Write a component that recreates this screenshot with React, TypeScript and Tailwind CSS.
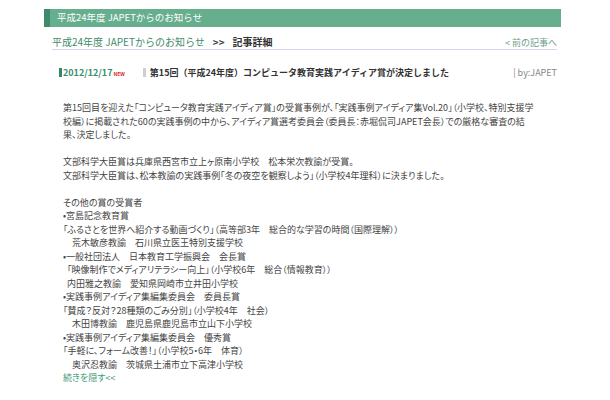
import React from "react";

const F = { fontFamily: '"Noto Sans CJK JP", "Noto Sans", sans-serif' };

const body: { t: string; cls?: string }[] = [
  { t: "第15回目を迎えた「コンピュータ教育実践アイディア賞」の受賞事例が、「実践事例アイディア集Vol.20」（小学校、特別支援学" },
  { t: "校編）に掲載された60の実践事例の中から、アイディア賞選考委員会（委員長：赤堀侃司JAPET会長）での厳格な審査の結" },
  { t: "果、決定しました。" },
  { t: "" },
  { t: "文部科学大臣賞は兵庫県西宮市立上ヶ原南小学校　松本栄次教諭が受賞。" },
  { t: "文部科学大臣賞は、松本教諭の実践事例「冬の夜空を観察しよう」（小学校4年理科）に決まりました。" },
  { t: "" },
  { t: "その他の賞の受賞者" },
  { t: "•宮島記念教育賞" },
  { t: "「ふるさとを世界へ紹介する動画づくり」（高等部3年　総合的な学習の時間（国際理解））" },
  { t: "荒木敏彦教諭　石川県立医王特別支援学校", cls: "pl-[9px]" },
  { t: "•一般社団法人　日本教育工学振興会　会長賞" },
  { t: "「映像制作でメディアリテラシー向上」（小学校6年　総合（情報教育））", cls: "pl-[4px]" },
  { t: "内田雅之教諭　愛知県岡崎市立井田小学校", cls: "pl-[4px]" },
  { t: "•実践事例アイディア集編集委員会　委員長賞" },
  { t: "「賛成？反対？28種類のごみ分別」（小学校4年　社会）" },
  { t: "木田博教諭　鹿児島県鹿児島市立山下小学校", cls: "pl-[9px]" },
  { t: "•実践事例アイディア集編集委員会　優秀賞" },
  { t: "「手軽に、フォーム改善！」（小学校5・6年　体育）" },
  { t: "奥沢忍教諭　茨城県土浦市立下高津小学校", cls: "pl-[9px]" },
];

export default function App() {
  return (
    <div className="w-[610px] h-[400px] bg-white pt-[9px] pl-[44px] overflow-hidden" style={F}>
      <div className="w-[517px]">
        <div className="h-[18px] flex items-center bg-[#66ae8e] border-l-[6px] border-[#3e8a6b] pl-[7px] text-white text-[9.5px] leading-none">
          平成24年度 JAPETからのお知らせ
        </div>
        <div className="mt-[8px] ml-[8px] mr-[4px] h-[15px] flex items-center justify-between border-b border-[#d4d4ea]">
          <div className="text-[10px] leading-none text-[#333] flex items-center">
            <span className="text-[#3f8c6c]">平成24年度 JAPETからのお知らせ</span>
            <span className="ml-[8px] font-bold text-[#444]">&gt;&gt;</span>
            <span className="ml-[8px] font-bold text-[#333]">記事詳細</span>
          </div>
          <span className="text-[9px] leading-none text-[#6f9c8c]">&lt; 前の記事へ</span>
        </div>
        <div className="mt-[16px] ml-[15px] mr-[4px] h-[12px] flex items-center">
          <span className="w-[3px] h-[9px] bg-[#2f8a6a]" />
          <span className="ml-[1px] text-[9px] font-bold leading-none text-[#3a8f6f]">2012/12/17</span>
          <span className="ml-[1px] text-[5px] font-bold leading-none text-[#e02020] self-end mb-[2px]">NEW</span>
          <span className="ml-[18px] w-[3px] h-[9px] bg-[#cfcfcf]" />
          <span className="ml-[4px] flex-1 text-[9px] font-bold leading-none text-[#333]">
            第15回（平成24年度）コンピュータ教育実践アイディア賞が決定しました
          </span>
          <span className="text-[9px] leading-none text-[#888]">| by:JAPET</span>
        </div>
        <div className="mt-[23px] ml-[19px] text-[9px] leading-[13.5px] text-[#444] [font-feature-settings:'palt']">
          {body.map((l, i) => (
            <div key={i} className={"whitespace-nowrap h-[13.5px] " + (l.cls ?? "")}>
              {l.t}
            </div>
          ))}
          <div className="whitespace-nowrap h-[13.5px] text-[#3f9a7a]">続きを隠す&lt;&lt;</div>
        </div>
      </div>
    </div>
  );
}
